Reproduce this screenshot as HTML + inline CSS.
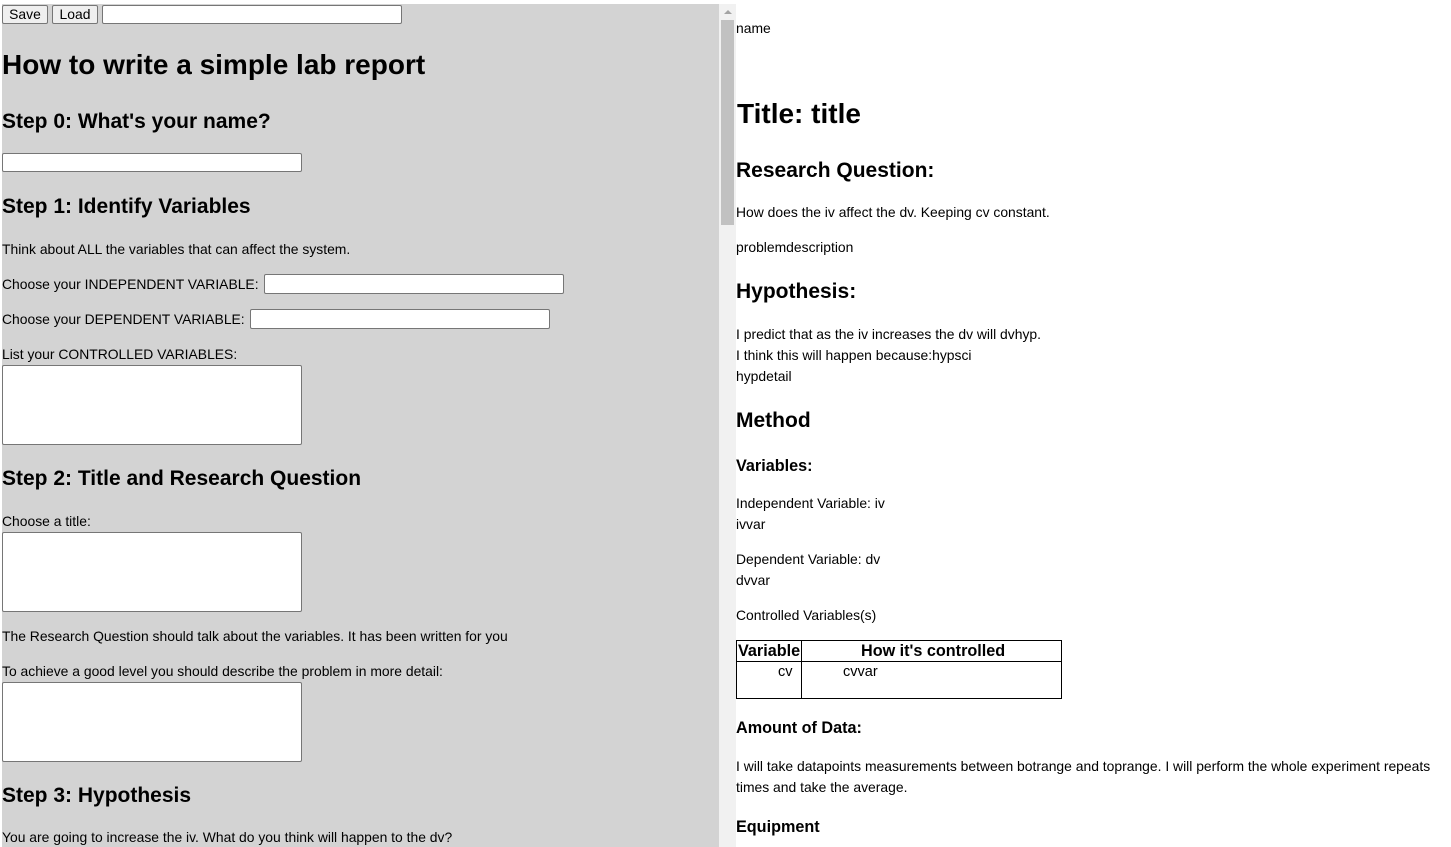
<!DOCTYPE html>
<html><head><meta charset="utf-8"><style>
*{margin:0;padding:0;box-sizing:border-box}
body{width:1451px;height:847px;overflow:hidden;background:#fff;font-family:"Liberation Sans",Arial,sans-serif;color:#000;position:relative}
.a{position:absolute;white-space:nowrap}
.p{font-size:13.9px;line-height:16px}
.h1{font-size:28px;font-weight:bold;line-height:32px;margin-top:1px}
.h3{font-size:21px;font-weight:bold;line-height:24px;margin-top:1px}
.h4{font-size:16.2px;font-weight:bold;line-height:20px;margin-top:1px}
.in{position:absolute;background:#fff;border:1px solid #767676;border-radius:2px}
.btn{position:absolute;background:#efefef;border:1px solid #767676;border-radius:2px;font-size:13.9px;text-align:center;line-height:17px}
#left{position:absolute;left:2px;top:4px;width:717px;height:843px;background:#d3d3d3}
</style></head><body>
<div id="left"></div>
<div style="position:absolute;left:719px;top:4px;width:17px;height:843px;background:#f1f1f1"></div>
<div style="position:absolute;left:721px;top:20px;width:13px;height:205px;background:#c1c1c1"></div>
<div style="position:absolute;left:724px;top:10px;width:0;height:0;border-left:4px solid transparent;border-right:4px solid transparent;border-bottom:4px solid #a3a3a3"></div>

<div class="btn" style="left:2px;top:5px;width:46px;height:19px">Save</div>
<div class="btn" style="left:52px;top:5px;width:46px;height:19px">Load</div>
<div class="in" style="left:102px;top:5px;width:300px;height:19px"></div>

<div class="a h1" style="left:2px;top:48px">How to write a simple lab report</div>
<div class="a h3" style="left:2px;top:109px">Step 0: What's your name?</div>
<div class="in" style="left:2px;top:153px;width:300px;height:19px"></div>
<div class="a h3" style="left:2px;top:194px">Step 1: Identify Variables</div>
<div class="a p" style="left:2px;top:241px">Think about ALL the variables that can affect the system.</div>
<div class="a p" style="left:2px;top:276px">Choose your INDEPENDENT VARIABLE:</div>
<div class="in" style="left:264px;top:274px;width:300px;height:20px"></div>
<div class="a p" style="left:2px;top:311px">Choose your DEPENDENT VARIABLE:</div>
<div class="in" style="left:250px;top:309px;width:300px;height:20px"></div>
<div class="a p" style="left:2px;top:346px">List your CONTROLLED VARIABLES:</div>
<div class="in" style="left:2px;top:365px;width:300px;height:80px"></div>
<div class="a h3" style="left:2px;top:466px">Step 2: Title and Research Question</div>
<div class="a p" style="left:2px;top:513px">Choose a title:</div>
<div class="in" style="left:2px;top:532px;width:300px;height:80px"></div>
<div class="a p" style="left:2px;top:628px">The Research Question should talk about the variables. It has been written for you</div>
<div class="a p" style="left:2px;top:663px">To achieve a good level you should describe the problem in more detail:</div>
<div class="in" style="left:2px;top:682px;width:300px;height:80px"></div>
<div class="a h3" style="left:2px;top:783px">Step 3: Hypothesis</div>
<div class="a p" style="left:2px;top:829px">You are going to increase the iv. What do you think will happen to the dv?</div>

<div class="a p" style="left:736px;top:20px">name</div>
<div class="a h1" style="left:737px;top:97px">Title: title</div>
<div class="a h3" style="left:736px;top:158px">Research Question:</div>
<div class="a p" style="left:736px;top:204px">How does the iv affect the dv. Keeping cv constant.</div>
<div class="a p" style="left:736px;top:239px">problemdescription</div>
<div class="a h3" style="left:736px;top:279px">Hypothesis:</div>
<div class="a p" style="left:736px;top:326px">I predict that as the iv increases the dv will dvhyp.</div>
<div class="a p" style="left:736px;top:347px">I think this will happen because:hypsci</div>
<div class="a p" style="left:736px;top:368px">hypdetail</div>
<div class="a h3" style="left:736px;top:408px">Method</div>
<div class="a h4" style="left:736px;top:455px">Variables:</div>
<div class="a p" style="left:736px;top:495px">Independent Variable: iv</div>
<div class="a p" style="left:736px;top:516px">ivvar</div>
<div class="a p" style="left:736px;top:551px">Dependent Variable: dv</div>
<div class="a p" style="left:736px;top:572px">dvvar</div>
<div class="a p" style="left:736px;top:607px">Controlled Variables(s)</div>
<div style="position:absolute;left:736px;top:640px;width:326px;height:59px;border:1px solid #000"></div>
<div style="position:absolute;left:737px;top:661px;width:324px;height:1px;background:#000"></div>
<div style="position:absolute;left:801px;top:641px;width:1px;height:57px;background:#000"></div>
<div class="a h4" style="left:738px;top:640px">Variable</div>
<div class="a h4" style="left:861px;top:640px">How it's controlled</div>
<div class="a" style="left:778px;top:663px;font-size:14.5px;line-height:18px">cv</div>
<div class="a" style="left:843px;top:663px;font-size:14.5px;line-height:18px">cvvar</div>
<div class="a h4" style="left:736px;top:717px">Amount of Data:</div>
<div class="a p" style="left:736px;top:758px">I will take datapoints measurements between botrange and toprange. I will perform the whole experiment repeats</div>
<div class="a p" style="left:736px;top:779px">times and take the average.</div>
<div class="a h4" style="left:736px;top:816px">Equipment</div>
</body></html>
